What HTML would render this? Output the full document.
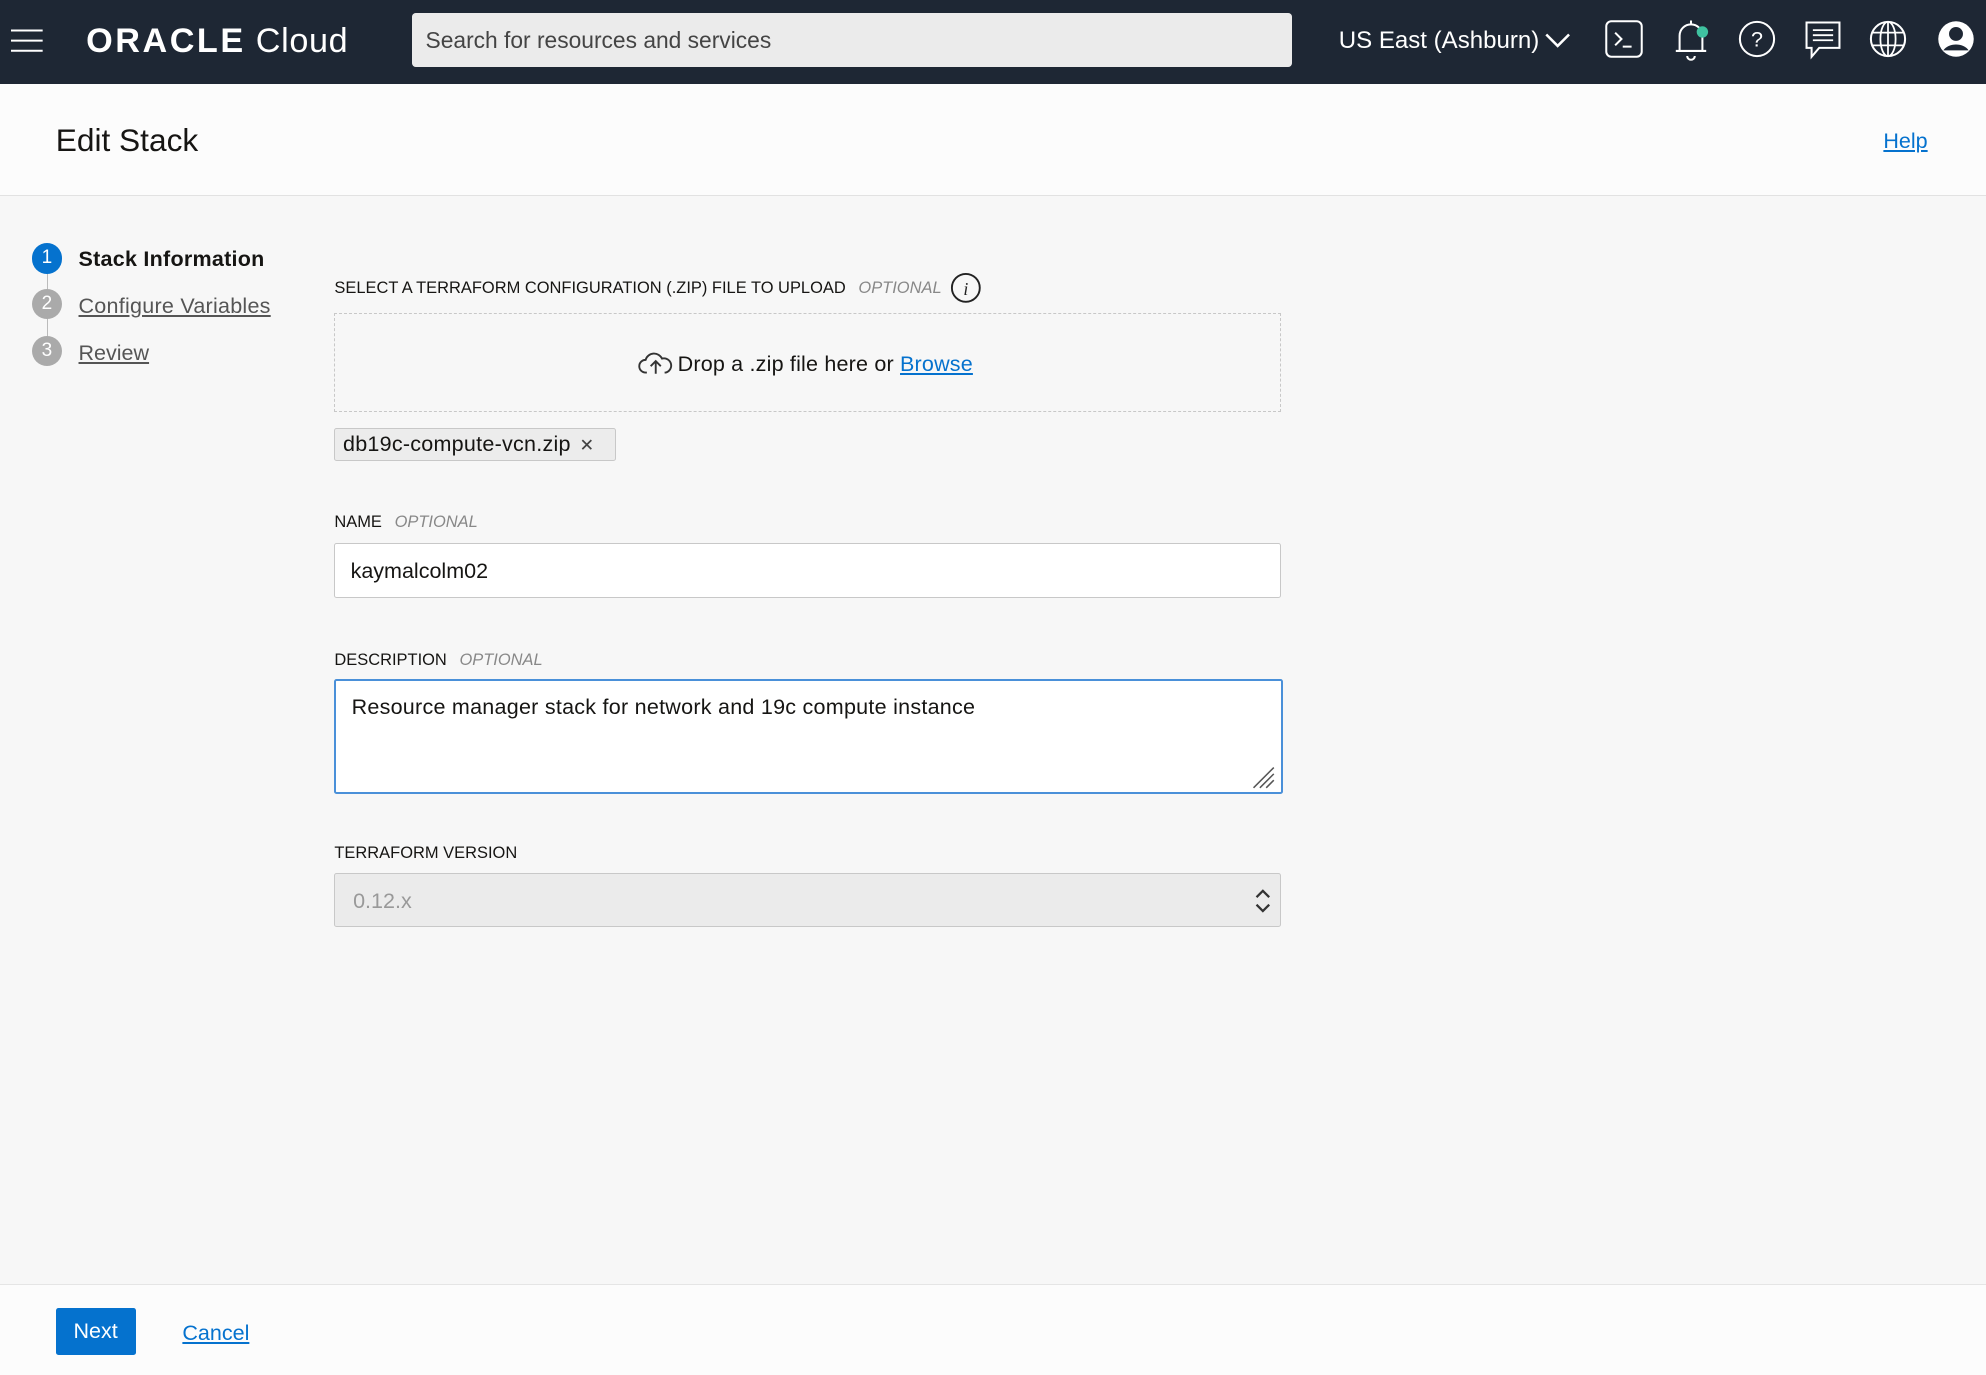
<!DOCTYPE html>
<html><head><meta charset="utf-8"><style>
html,body{margin:0;padding:0;}
body{width:1986px;height:1374px;overflow:hidden;background:#f7f7f7;}
#w{zoom:1.26658;width:1568px;height:1085px;position:relative;font-family:"Liberation Sans",sans-serif;color:#161513;}
.hdr{position:absolute;left:0;top:0;width:1568px;height:66px;background:#1e2734;}
.sub{position:absolute;top:66px;left:0;width:1568px;height:88px;background:#fcfcfc;border-bottom:1px solid #e2e2e2;}
.abs{position:absolute;}
a{color:#0572ce;text-decoration:underline;}
.lbl{font-size:13px;color:#161513;}
.opt{font-style:italic;color:#888;font-size:13px;margin-left:10px;}
.inp{position:absolute;left:264px;width:747px;background:#fff;border:1px solid #c8c8c8;border-radius:2px;box-sizing:border-box;font-size:17px;}
.ic{position:absolute;top:16px;}
</style></head><body><div id="w">
<div class="hdr">
 <svg class="abs" style="left:9px;top:22px" width="26" height="20"><g stroke="#fff" stroke-width="1.6"><line x1="0" y1="2" x2="25" y2="2"/><line x1="0" y1="10" x2="25" y2="10"/><line x1="0" y1="18" x2="25" y2="18"/></g></svg>
 <div class="abs" style="left:68px;top:17px;color:#fff;font-size:27px;"><span style="font-weight:700;letter-spacing:2px">ORACLE</span><span style="font-weight:300;margin-left:8px;letter-spacing:0.5px">Cloud</span></div>
 <div class="abs" style="left:325px;top:10px;width:695px;height:43px;background:#ebebeb;border-radius:3px;font-size:18px;color:#444;line-height:43px;padding-left:11px;box-sizing:border-box">Search for resources and services</div>
 <div class="abs" style="left:1057px;top:21px;color:#fff;font-size:19px;font-weight:500">US East (Ashburn)</div>
 <svg class="abs" style="left:1220px;top:25px" width="20" height="14"><path d="M1 2 L10 11 L19 2" stroke="#fff" stroke-width="2" fill="none"/></svg>
 <svg class="ic" style="left:1267px" width="30" height="30"><rect x="1" y="1" width="28" height="28" rx="4" stroke="#fff" stroke-width="1.6" fill="none"/><path d="M8 10l5 5-5 5M14 21h7" stroke="#fff" stroke-width="1.6" fill="none"/></svg>
 <svg class="ic" style="left:1320px;top:14px" width="30" height="34"><path d="M3 26h24M6 26V14a9 9 0 0118 0v12M12 30a3 3 0 006 0M15 2v3" stroke="#fff" stroke-width="1.6" fill="none"/><circle cx="24" cy="11" r="4.5" fill="#3fc2a0"/></svg>
 <svg class="ic" style="left:1372px" width="30" height="30"><circle cx="15" cy="15" r="13.5" stroke="#fff" stroke-width="1.6" fill="none"/><text x="15" y="21" fill="#fff" font-size="17" text-anchor="middle" font-family="Liberation Sans">?</text></svg>
 <svg class="ic" style="left:1424px" width="30" height="32"><path d="M2 2h26v20H12l-6 7v-7H2z" stroke="#fff" stroke-width="1.6" fill="none"/><path d="M7 8h16M7 12h16M7 16h16" stroke="#fff" stroke-width="1.4"/></svg>
 <svg class="ic" style="left:1476px" width="30" height="30"><circle cx="15" cy="15" r="13.5" stroke="#fff" stroke-width="1.6" fill="none"/><ellipse cx="15" cy="15" rx="6" ry="13.5" stroke="#fff" stroke-width="1.4" fill="none"/><path d="M2 10h26M2 20h26M15 1.5v27" stroke="#fff" stroke-width="1.4"/></svg>
 <svg class="ic" style="left:1529px" width="30" height="30"><circle cx="15" cy="15" r="14" fill="#fff"/><circle cx="15" cy="11" r="5.5" fill="#1e2734"/><path d="M5 24a11 8 0 0120 0" fill="#1e2734"/></svg>
</div>
<div class="sub">
 <div class="abs" style="left:44px;top:30px;font-size:25px;">Edit Stack</div>
 <a class="abs" style="left:1487px;top:36px;font-size:17px;">Help</a>
</div>
<div class="abs" style="left:37px;top:204px;width:1px;height:75px;background:#bbb"></div>
<div class="abs" style="left:25px;top:192px;width:24px;height:24px;border-radius:50%;background:#0572ce;color:#fff;font-size:15px;text-align:center;line-height:24px">1</div>
<div class="abs" style="left:62px;top:195px;font-size:17px;font-weight:bold;letter-spacing:0.2px">Stack Information</div>
<div class="abs" style="left:25px;top:228px;width:24px;height:24px;border-radius:50%;background:#aaa;color:#fff;font-size:15px;text-align:center;line-height:24px">2</div>
<a class="abs" style="left:62px;top:232px;font-size:17px;color:#555;letter-spacing:0.2px">Configure Variables</a>
<div class="abs" style="left:25px;top:265px;width:24px;height:24px;border-radius:50%;background:#aaa;color:#fff;font-size:15px;text-align:center;line-height:24px">3</div>
<a class="abs" style="left:62px;top:269px;font-size:17px;color:#555">Review</a>

<div class="abs lbl" style="left:264px;top:220px">SELECT A TERRAFORM CONFIGURATION (.ZIP) FILE TO UPLOAD<span class="opt">OPTIONAL</span></div>
<svg class="abs" style="left:750px;top:215px" width="25" height="25"><circle cx="12.5" cy="12.5" r="11" stroke="#222" stroke-width="1.5" fill="none"/><text x="12.5" y="18" font-size="14" font-style="italic" text-anchor="middle" font-family="Liberation Serif" fill="#222">i</text></svg>
<div class="abs" style="left:264px;top:247px;width:747px;height:78px;border:1px dashed #c8c8c8;box-sizing:border-box;background:#f7f7f7"></div>
<svg class="abs" style="left:504px;top:277px" width="28" height="20"><path d="M7 17H6a5 5 0 010-10 7 7 0 0113-1 5 5 0 013 11h-1M14 18V9M10 12l4-4 4 4" stroke="#333" stroke-width="1.5" fill="none"/></svg>
<div class="abs" style="left:535px;top:278px;font-size:17px;letter-spacing:0.15px">Drop a .zip file here or <a>Browse</a></div>
<div class="abs" style="left:264px;top:338px;height:26px;width:222px;border:1px solid #c8c8c8;border-radius:2px;background:#ececec;box-sizing:border-box;font-size:17px;line-height:25px;padding-left:6px;letter-spacing:0.2px">db19c-compute-vcn.zip <span style="margin-left:2px;color:#444;font-size:14px">✕</span></div>

<div class="abs lbl" style="left:264px;top:405px">NAME<span class="opt">OPTIONAL</span></div>
<div class="inp" style="top:429px;height:43px;line-height:43px;padding-left:12px">kaymalcolm02</div>
<div class="abs lbl" style="left:264px;top:514px">DESCRIPTION<span class="opt">OPTIONAL</span></div>
<div class="inp" style="top:536px;height:91px;border:2px solid #4a90d9;padding:11px 0 0 12px;width:749px;letter-spacing:0.2px">Resource manager stack for network and 19c compute instance</div>
<svg class="abs" style="left:988px;top:604px" width="20" height="20"><path d="M2 18L18 2M7 18L18 7M12 18l6-6" stroke="#555" stroke-width="1.2"/></svg>
<div class="abs lbl" style="left:264px;top:666px">TERRAFORM VERSION</div>
<div class="inp" style="top:689px;height:43px;line-height:43px;padding-left:14px;background:#ebebeb;color:#999">0.12.x</div>
<svg class="abs" style="left:990px;top:700px" width="14" height="22"><path d="M2 8l5-5 5 5M2 14l5 5 5-5" stroke="#333" stroke-width="1.8" fill="none"/></svg>

<div class="abs" style="left:0;top:1014px;width:1568px;height:71px;background:#fcfcfc;border-top:1px solid #e5e5e5"></div>
<div class="abs" style="left:44px;top:1033px;width:63px;height:37px;background:#0572ce;color:#fff;font-size:17px;text-align:center;line-height:37px;border-radius:2px">Next</div>
<a class="abs" style="left:144px;top:1043px;font-size:17px">Cancel</a>
</div></body></html>
